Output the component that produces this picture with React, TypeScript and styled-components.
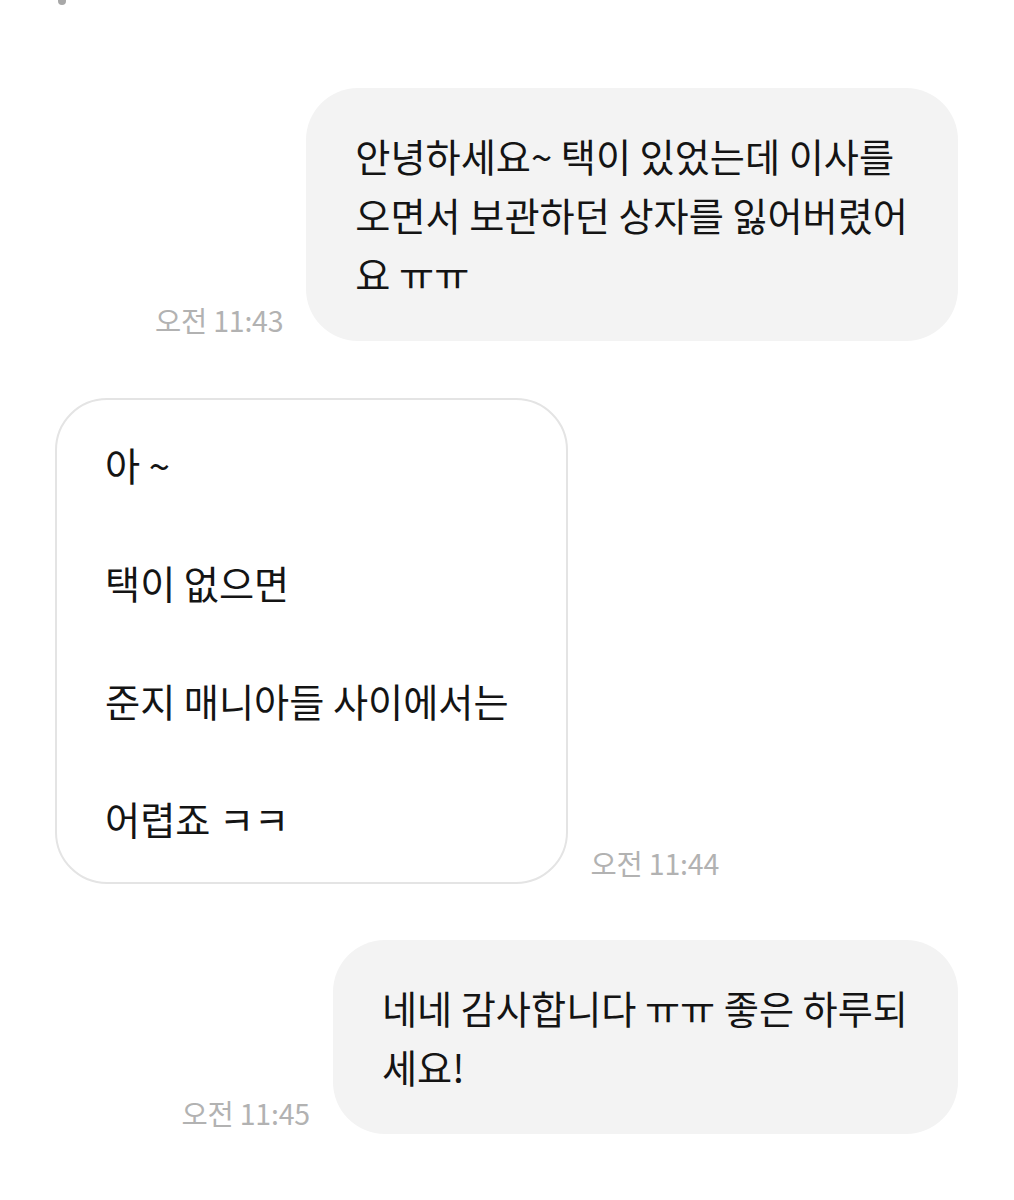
import React from "react";
import styled, { createGlobalStyle } from "styled-components";

const Global = createGlobalStyle`
  html, body {
    margin: 0;
    padding: 0;
    background: #ffffff;
  }
  body {
    font-family: "Noto Sans CJK KR", "Noto Sans", "Liberation Sans", sans-serif;
    color: #141414;
  }
`;

const Page = styled.div`
  width: 1014px;
  min-height: 1200px;
  box-sizing: border-box;
  padding: 0 56px 0 55px;
  display: flex;
  flex-direction: column;
`;

const TopMark = styled.div`
  width: 8px;
  height: 5px;
  margin-left: 3px;
  border-radius: 0 0 4px 4px;
  background: #a8a8a8;
`;

const Row = styled.div<{ $out?: boolean; $gapTop: number }>`
  display: flex;
  align-items: flex-end;
  justify-content: ${(p) => (p.$out ? "flex-end" : "flex-start")};
  gap: 23px;
  margin-top: ${(p) => p.$gapTop}px;
`;

const Bubble = styled.div<{ $out?: boolean }>`
  box-sizing: border-box;
  padding: ${(p) => (p.$out ? "38px 50px 38px 49px" : "35px 57px 34px 48px")};
  border-radius: 52px;
  background: ${(p) => (p.$out ? "#f3f3f3" : "#ffffff")};
  border: ${(p) => (p.$out ? "none" : "2px solid #e4e4e4")};
  font-size: 38.2px;
  line-height: 59px;
  white-space: pre;
`;

const Line = styled.div`
  min-height: 59px;
`;

const Time = styled.span`
  font-size: 28.5px;
  line-height: 32px;
  color: #b2b2b2;
  margin-bottom: 5px;
  white-space: nowrap;
  letter-spacing: -0.2px;
`;

type Msg = { out: boolean; lines: string[]; time: string; gap: number };

const messages: Msg[] = [
  {
    out: true,
    lines: ["안녕하세요~ 택이 있었는데 이사를", "오면서 보관하던 상자를 잃어버렸어", "요 ㅠㅠ"],
    time: "오전 11:43",
    gap: 83,
  },
  {
    out: false,
    lines: ["아 ~", "", "택이 없으면", "", "준지 매니아들 사이에서는", "", "어렵죠 ㅋㅋ"],
    time: "오전 11:44",
    gap: 57,
  },
  {
    out: true,
    lines: ["네네 감사합니다 ㅠㅠ 좋은 하루되", "세요!"],
    time: "오전 11:45",
    gap: 56,
  },
];

export default function App() {
  return (
    <>
      <Global />
      <Page>
        <TopMark />
        {messages.map((m, i) => (
          <Row key={i} $out={m.out} $gapTop={m.gap}>
            {m.out && <Time>{m.time}</Time>}
            <Bubble $out={m.out}>
              {m.lines.map((l, j) => (
                <Line key={j}>{l}</Line>
              ))}
            </Bubble>
            {!m.out && <Time>{m.time}</Time>}
          </Row>
        ))}
      </Page>
    </>
  );
}
